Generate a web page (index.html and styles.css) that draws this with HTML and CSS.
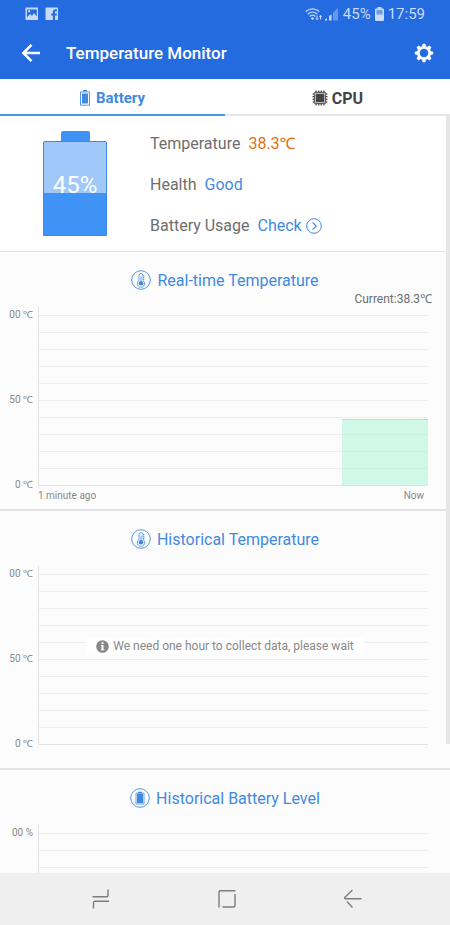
FILE: index.html
```html
<!DOCTYPE html>
<html lang="en">
<head>
<meta charset="utf-8">
<meta name="viewport" content="width=device-width, initial-scale=1">
<title>Temperature Monitor</title>
<link rel="stylesheet" href="styles.css">
</head>
<body>
<svg class="defs" aria-hidden="true">
  <symbol id="thermo" viewBox="0 0 20 20">
    <circle cx="10" cy="10" r="9.3" fill="none" stroke="currentColor" stroke-width=".9"/>
    <path d="M8 10.500V5.500a2 2 0 0 1 4 0v5a3.700 3.700 0 1 1-4 0z" fill="none" stroke="currentColor" stroke-width=".8"/>
    <path d="M10 6.500v6" stroke="currentColor" stroke-width=".8"/>
    <circle cx="10" cy="13.200" r="2.300" fill="currentColor"/>
    <path d="M12 5.500h1.500M12 7.500h1.500M12 9.500h1.500" stroke="currentColor" stroke-width=".7"/>
  </symbol>
</svg>

<header class="top">
  <div class="status">
    <div class="status-group">
      <svg width="14" height="14" viewBox="0 0 14 14"><path fill="currentColor" fill-rule="evenodd" d="M1 .5h11.500a.5.5 0 0 1 .5.5v11.500a.5.5 0 0 1-.5.5H1a.5.5 0 0 1-.5-.5V1A.5.5 0 0 1 1 .5zM2 2.500v7.800l3-3.300 2 1.800 2-2.800 2.800 3.600V2.500zM3.200 3.300h2v2h-2z"/></svg>
      <svg width="14" height="14" viewBox="0 0 14 14"><path fill="currentColor" d="M1.200.5h11.100a.7.7 0 0 1 .7.7v11.100a.7.7 0 0 1-.7.700H10V8.400h1.700l.3-2H10V5.200c0-.6.2-1 1-1h1V2.400c-.2 0-.8-.1-1.500-.1-1.600 0-2.600.9-2.600 2.600v1.500H6.200v2h1.700V13H1.200a.7.7 0 0 1-.7-.7V1.200a.7.7 0 0 1 .7-.7z"/></svg>
    </div>
    <div class="status-group status-right">
      <svg width="34" height="16" viewBox="0 0 34 16">
        <g fill="none" stroke="currentColor" stroke-width="1.300" stroke-linecap="round">
          <path d="M1.200 5.200a9.500 9.500 0 0 1 12.600 0M3.200 7.700a6.500 6.500 0 0 1 8.600 0M5.200 10.100a3.600 3.600 0 0 1 4.600 0"/>
        </g>
        <circle cx="7.500" cy="12.600" r="1.300" fill="currentColor"/>
        <path d="M12 9.500v4M10.700 12.300l1.300 1.500 1.300-1.500M15.500 13.500v-4M14.200 10.800l1.300-1.500 1.300 1.500" fill="none" stroke="currentColor"/>
        <path d="M20 14.500v-1.200l2-1v2.200zM24 14.500v-4.500l2.500-1.500v6z" fill="currentColor"/>
        <path d="M28 14.500V6.500L33 2v12.500z" fill="currentColor" opacity=".4"/>
      </svg>
      <span>45%</span>
      <svg width="9" height="14" viewBox="0 0 9 14"><path fill="currentColor" d="M2.500 0h4v1.500H8a1 1 0 0 1 1 1V13a1 1 0 0 1-1 1H1a1 1 0 0 1-1-1V2.500a1 1 0 0 1 1-1h1.500z"/><path fill="#6b9aea" d="M1.500 3h6v4.500h-6z"/></svg>
      <span>17:59</span>
    </div>
  </div>
  <div class="appbar">
    <button class="icon-btn" aria-label="Back">
      <svg width="20" height="20" viewBox="0 0 20 20"><path d="M10.500 1.800 2.300 10l8.200 8.200M2.800 10H19" fill="none" stroke="#fff" stroke-width="2.500"/></svg>
    </button>
    <h1>Temperature Monitor</h1>
    <button class="icon-btn" aria-label="Settings">
      <svg width="20" height="20" viewBox="0 0 20 20">
        <circle cx="10" cy="10" r="5.700" fill="none" stroke="#fff" stroke-width="2.800"/>
        <g fill="#fff"><path id="tooth" d="M8 3.500 8.700.8h2.600l.7 2.700z"/>
        <use href="#tooth" transform="rotate(45 10 10)"/><use href="#tooth" transform="rotate(90 10 10)"/><use href="#tooth" transform="rotate(135 10 10)"/><use href="#tooth" transform="rotate(180 10 10)"/><use href="#tooth" transform="rotate(225 10 10)"/><use href="#tooth" transform="rotate(270 10 10)"/><use href="#tooth" transform="rotate(315 10 10)"/></g>
      </svg>
    </button>
  </div>
</header>

<nav class="tabs">
  <button class="tab tab-active">
    <svg width="10" height="16" viewBox="0 0 10 16"><path d="M3 0h4v1.500H3z" fill="currentColor"/><path d="M.5 1.900h9v13.300h-9z" fill="none" stroke="currentColor" stroke-width=".9"/><path d="M2 3.500h6v10H2z" fill="currentColor"/></svg>
    Battery
  </button>
  <button class="tab">
    <svg width="16" height="16" viewBox="0 0 16 16"><path d="M4 .5v15M6.700.5v15M9.300.5v15M12 .5v15M.5 4h15M.5 6.700h15M.5 9.300h15M.5 12h15" stroke="currentColor" stroke-width="1.200"/><rect x="2.300" y="2.300" width="11.400" height="11.400" rx="1" fill="#bbb" stroke="currentColor"/><path d="M4 4h8v8H4z" fill="currentColor"/></svg>
    CPU
  </button>
</nav>

<main class="content">
  <section class="summary">
    <div class="battery">
      <div class="battery-cap"></div>
      <div class="battery-body"><div class="battery-fill"></div></div>
      <span class="battery-text">45%</span>
    </div>
    <dl class="facts">
      <div><dt>Temperature</dt><dd class="hot">38.3℃</dd></div>
      <div><dt>Health</dt><dd>Good</dd></div>
      <div><dt>Battery Usage</dt><dd><a href="#">Check
        <svg width="16" height="16" viewBox="0 0 16 16"><circle cx="8" cy="8" r="7.300" fill="none" stroke="currentColor"/><path d="M6.500 4.300 10.200 8l-3.700 3.700" fill="none" stroke="currentColor" stroke-width="1.200"/></svg></a></dd></div>
    </dl>
  </section>

  <section class="card">
    <h2><svg width="20" height="20"><use href="#thermo"/></svg>Real-time Temperature</h2>
    <p class="current">Current:38.3℃</p>
    <div class="chart">
      <div class="y-axis"><span>00 ℃</span><span>50 ℃</span><span>0 ℃</span></div>
      <div class="plot"><div class="bar"></div></div>
      <div class="x-axis"><span>1 minute ago</span><span>Now</span></div>
    </div>
  </section>

  <section class="card">
    <h2><svg width="20" height="20"><use href="#thermo"/></svg>Historical Temperature</h2>
    <div class="chart">
      <div class="y-axis"><span>00 ℃</span><span>50 ℃</span><span>0 ℃</span></div>
      <div class="plot"></div>
    </div>
    <div class="notice"><p>
      <svg width="13" height="13" viewBox="0 0 13 13"><circle cx="6.500" cy="6.500" r="6.300" fill="#888"/><path d="M5.500 2.300h2v1.700h-2zM5 5h2.500v4.300h.7v1H4.800v-1h.7V6H5z" fill="#fff"/></svg>
      We need one hour to collect data, please wait</p></div>
  </section>

  <section class="card">
    <h2><svg width="20" height="20" viewBox="0 0 20 20"><circle cx="10" cy="10" r="9.300" fill="none" stroke="currentColor" stroke-width=".9"/><path d="M8 3.700h4v1.500H8z" fill="currentColor"/><path d="M6 5.200h8v10.800H6z" fill="none" stroke="currentColor" stroke-width=".8"/><path d="M7 6h6v9H7z" fill="currentColor"/></svg>Historical Battery Level</h2>
    <div class="chart">
      <div class="y-axis"><span>00 %</span></div>
      <div class="plot"></div>
    </div>
  </section>
  <div class="scrollbar"></div>
</main>

<footer class="navbar">
  <button class="icon-btn" aria-label="Recent apps"><svg width="20" height="20" viewBox="0 0 20 20"><path d="M1.500 7.700h14q1.500 0 1.500-1.500V.5M18 12.300H4q-1.500 0-1.500 1.500v5.700" fill="none" stroke="#7d7d7d" stroke-width="1.400"/></svg></button>
  <button class="icon-btn" aria-label="Home"><svg width="20" height="20" viewBox="0 0 20 20"><path d="M18.500 1.700H3.500q-1.500 0-1.500 1.500V18.500M5.500 18H16.500q1.500 0 1.500-1.500V5" fill="none" stroke="#7d7d7d" stroke-width="1.400"/></svg></button>
  <button class="icon-btn" aria-label="Go back"><svg width="20" height="20" viewBox="0 0 20 20"><path d="M10.500 1 3 8.200q-1 1.500.5 1.500H19.500M5 12.500l5.500 6" fill="none" stroke="#7d7d7d" stroke-width="1.400"/></svg></button>
</footer>
</body>
</html>
```

FILE: styles.css
```css
* { box-sizing: border-box; }

body {
  margin: 0;
  height: 100vh;
  display: flex;
  flex-direction: column;
  overflow: hidden;
  font-family: Roboto, "Noto Sans", "Noto Sans CJK SC", sans-serif;
  font-size: 16px;
  color: #6e6e6e;
  background: #fcfcfc;
}

h1, h2, p, dl, dd { margin: 0; font-weight: 400; }
svg { display: block; flex: none; }
.defs { position: absolute; width: 0; height: 0; }
button { border: 0; padding: 0; background: none; font: inherit; color: inherit; }

/* Status bar and title bar */
.top { background: #246bdf; color: #c8dafa; }
.status {
  display: flex;
  justify-content: space-between;
  height: 28px;
  padding: 0 25px;
}
.status-group { display: flex; align-items: center; gap: 6px; }
.status-right { gap: 4px; font-size: 15px; }
.appbar { display: flex; align-items: center; height: 51px; padding: 0 16px 2px 21px; }
.appbar h1 {
  flex: 1;
  margin-left: 25px;
  font-size: 17px;
  font-weight: 500;
  color: #fff;
}

/* Tabs */
.tabs { display: flex; height: 37px; background: #fff; }
.tab {
  flex: 1;
  display: flex;
  align-items: center;
  justify-content: center;
  gap: 4px;
  padding-top: 3px;
  border-bottom: 2px solid #e6e6e6;
  font-weight: 700;
  color: #444;
}
.tab-active { gap: 6px; border-color: #4a95e8; color: #3f8ae0; font-size: 15px; }

/* Content */
.content { position: relative; flex: 1; min-height: 0; overflow: hidden; }
.scrollbar {
  position: absolute;
  top: 0;
  right: 0;
  width: 4px;
  height: 83%;
  background: #e6e6e6;
}

.summary {
  display: flex;
  align-items: center;
  gap: 43px;
  padding: 7px 43px 5px;
  border-bottom: 1px solid #e2e2e2;
  background: #fff;
}
.battery { position: relative; width: 64px; padding-bottom: 2px; }
.battery-cap {
  width: 29px;
  height: 10px;
  margin: 0 auto;
  border-radius: 2px 2px 0 0;
  background: #4093f6;
}
.battery-body {
  display: flex;
  align-items: flex-end;
  height: 95px;
  border: 1px solid #3f8ae0;
  border-radius: 2px 2px 0 0;
  background: #a0c9fa;
}
.battery-fill { width: 100%; height: 45%; background: #4093f6; }
.battery-text {
  position: absolute;
  inset: 0;
  display: flex;
  align-items: center;
  justify-content: center;
  font-size: 24px;
  color: #fff;
}
.facts div { display: flex; gap: 8px; line-height: 41px; }
.facts dd, .facts a { color: #3f8ae0; }
.facts a { display: flex; align-items: center; gap: 4px; text-decoration: none; }
.facts .hot { color: #e07010; }

/* Chart cards */
.card { position: relative; height: 259px; border-bottom: 2px solid #e2e2e2; }
.card h2 {
  display: flex;
  align-items: center;
  justify-content: center;
  gap: 6px;
  height: 55px;
  padding-top: 1px;
  font-size: 16px;
  color: #3f8ae0;
}
.current { position: absolute; top: 39px; right: 18px; font-size: 12px; line-height: 16px; }
.chart {
  display: grid;
  grid-template-columns: 38px 1fr;
  grid-template-rows: 179px 23px;
  padding-right: 22px;
  font-size: 10px;
  color: #888;
}
.y-axis {
  grid-row: 1 / 3;
  display: flex;
  flex-direction: column;
  justify-content: space-between;
  height: 186px;
  padding-right: 5px;
  line-height: 16px;
  text-align: right;
}
.plot {
  display: flex;
  align-items: flex-end;
  justify-content: flex-end;
  padding-top: 8px;
  border-left: 1px solid #e2e2e2;
  border-bottom: 1px solid #e2e2e2;
  background: repeating-linear-gradient(#eee 0 1px, transparent 1px 17px) content-box;
}
.bar {
  width: 22%;
  height: 66px;
  border-top: 1px solid #a5e6cc;
  background: rgba(150, 240, 205, 0.42);
}
.x-axis { display: flex; justify-content: space-between; padding-right: 4px; line-height: 20px; }

.notice {
  position: absolute;
  inset: 127px 0 auto;
  display: flex;
  justify-content: center;
}
.notice p {
  display: flex;
  align-items: center;
  gap: 4px;
  padding: 0 10px;
  background: #fff;
  font-size: 12px;
  line-height: 17px;
  color: #888;
}

/* System navigation */
.navbar {
  display: flex;
  align-items: center;
  justify-content: space-between;
  height: 52px;
  padding: 0 88px 0 91px;
  background: #efefef;
}
```
